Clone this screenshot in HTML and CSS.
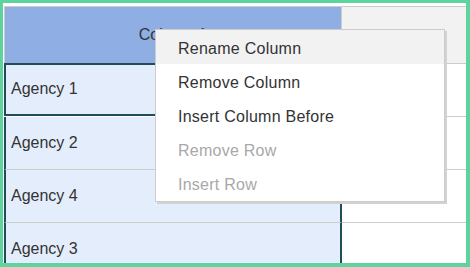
FILE: index.html
```html
<!DOCTYPE html>
<html lang="en">
<head>
  <meta charset="UTF-8">
  <meta name="viewport" content="width=device-width, initial-scale=1.0">
  <title>Sheet</title>
  <link rel="stylesheet" href="styles.css">
</head>
<body>

  <div class="frame">
    <div class="sheet">
      <div class="row head">
        <div class="cell col-a">Column 1</div>
        <div class="cell col-b"></div>
      </div>
      <div class="row">
        <div class="cell col-a active">Agency 1</div>
        <div class="cell col-b"></div>
      </div>
      <div class="row">
        <div class="cell col-a">Agency 2</div>
        <div class="cell col-b"></div>
      </div>
      <div class="row">
        <div class="cell col-a">Agency 4</div>
        <div class="cell col-b"></div>
      </div>
      <div class="row">
        <div class="cell col-a">Agency 3</div>
        <div class="cell col-b"></div>
      </div>
    </div>

    <!-- context menu -->
    <ul class="menu">
      <li class="item hover">Rename Column</li>
      <li class="item">Remove Column</li>
      <li class="item">Insert Column Before</li>
      <li class="item disabled">Remove Row</li>
      <li class="item disabled">Insert Row</li>
    </ul>
  </div>

</body>
</html>
```

FILE: styles.css
```css
body {
  margin: 0;
  font-family: "Liberation Sans", Arial, sans-serif;
  font-size: 16px;
  color: #333;
}
.frame {
  position: relative;
  width: 470px;
  height: 267px;
  box-sizing: border-box;
  border-style: solid;
  border-color: #5dd39e;
  border-width: 3px 4px 4px 3px;
  background: #fff;
  padding: 3px 0 0 1px;
  overflow: hidden;
}
.sheet {
  border-top: 1px solid #ccc;
}
.row {
  display: flex;
}
.cell {
  box-sizing: border-box;
  height: 53px;
  border-bottom: 1px solid #ccc;
  display: flex;
  align-items: center;
}
.head .cell {
  height: 57px;
}
.col-a {
  width: 338px;
  flex: none;
  background: #e4edfc;
  border-left: 2px solid #1f4e59;
  border-right: 2px solid #1f4e59;
  padding-left: 5px;
}
.col-b {
  flex: 1;
  background: #fff;
}
.head .col-a {
  background: #8eaee4;
  border-left: 1px solid #ccc;
  border-right: 1px solid #ccc;
  justify-content: center;
  padding-left: 0;
}
.head .col-b {
  background: #f2f2f2;
}
.active {
  margin-top: -1px;
  height: 53px;
  border-top: 2px solid #1f4e59;
  border-bottom: 2px solid #1f4e59;
  padding-bottom: 2px;
}
.menu {
  position: absolute;
  left: 152px;
  top: 26px;
  width: 290px;
  box-sizing: border-box;
  margin: 0;
  padding: 0 0 1px;
  list-style: none;
  background: #fff;
  border: 1px solid #ccc;
  box-shadow: 2px 2px 0 #d2d2d2;
}
.item {
  height: 34px;
  box-sizing: border-box;
  padding: 3px 0 0 22px;
  line-height: 31px;
  letter-spacing: 0.25px;
  color: #333;
}
.item.hover {
  background: #f2f2f2;
}
.item.disabled {
  color: #a8a8a8;
}
```
